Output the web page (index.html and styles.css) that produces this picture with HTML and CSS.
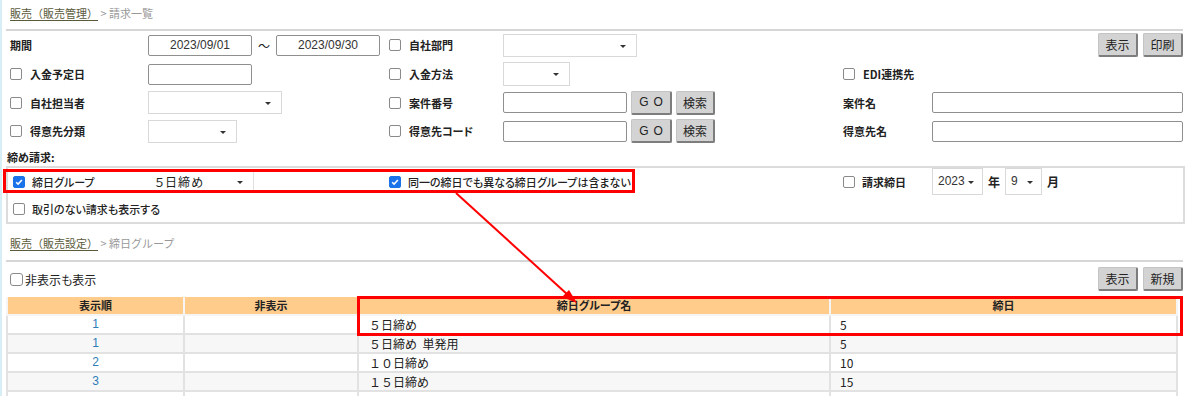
FILE: index.html
```html
<!DOCTYPE html>
<html lang="ja">
<head>
    <meta charset="UTF-8">
    <title>請求一覧</title>
    <link rel="stylesheet" href="styles.css">
</head>
<body>
    <div class="crumb"><a>販売（販売管理）</a> &gt; 請求一覧</div>

    <div class="filters">
        <div class="cell"><span class="lbl">期間</span></div>
        <div class="cell">
            <input class="txt date" value="2023/09/01">
            <span class="tilde">～</span>
            <input class="txt date" value="2023/09/30">
        </div>
        <div class="cell"><span class="chk"></span><span class="lbl">自社部門</span></div>
        <div class="cell"><div class="sel light" style="width:134px"></div></div>
        <div class="cell"></div>
        <div class="cell right">
            <button class="btn">表示</button><button class="btn">印刷</button>
        </div>

        <div class="cell"><span class="chk"></span><span class="lbl">入金予定日</span></div>
        <div class="cell"><input class="txt" style="width:104px"></div>
        <div class="cell"><span class="chk"></span><span class="lbl">入金方法</span></div>
        <div class="cell"><div class="sel light tall" style="width:67px"></div></div>
        <div class="cell wide"><span class="chk"></span><span class="lbl">EDI連携先</span></div>

        <div class="cell"><span class="chk"></span><span class="lbl">自社担当者</span></div>
        <div class="cell"><div class="sel light" style="width:134px"></div></div>
        <div class="cell"><span class="chk"></span><span class="lbl">案件番号</span></div>
        <div class="cell">
            <input class="txt" style="width:124px"><button class="btn go">GO</button><button class="btn">検索</button>
        </div>
        <div class="cell"><span class="lbl">案件名</span></div>
        <div class="cell"><input class="txt full"></div>

        <div class="cell"><span class="chk"></span><span class="lbl">得意先分類</span></div>
        <div class="cell"><div class="sel light" style="width:89px"></div></div>
        <div class="cell"><span class="chk"></span><span class="lbl">得意先コード</span></div>
        <div class="cell">
            <input class="txt" style="width:124px"><button class="btn go">GO</button><button class="btn">検索</button>
        </div>
        <div class="cell"><span class="lbl">得意先名</span></div>
        <div class="cell"><input class="txt full"></div>
    </div>

    <div class="section-title">締め請求:</div>
    <div class="closing">
        <div class="cell"><span class="chk on"><svg viewBox="0 0 12 12"><path d="M2.6 6.2l2.3 2.3 4.6-5" fill="none" stroke="#fff" stroke-width="1.8"/></svg></span><span class="lbl normal">締日グループ</span></div>
        <div class="cell"><div class="sel plain" style="width:106px">５日締め</div></div>
        <div class="cell"><span class="chk on"><svg viewBox="0 0 12 12"><path d="M2.6 6.2l2.3 2.3 4.6-5" fill="none" stroke="#fff" stroke-width="1.8"/></svg></span><span class="lbl normal">同一の締日でも異なる締日グループは含まない</span></div>
        <div class="cell"><span class="chk"></span><span class="lbl">請求締日</span></div>
        <div class="cell">
            <div class="sel small" style="width:51px">2023</div>
            <span class="unit">年</span>
            <div class="sel small" style="width:37px">9</div>
            <span class="unit">月</span>
        </div>

        <div class="cell row-all"><span class="chk"></span><span class="lbl normal">取引のない請求も表示する</span></div>
    </div>

    <div class="crumb second"><a>販売（販売設定）</a> &gt; 締日グループ</div>

    <div class="toolbar">
        <label class="show-hidden"><span class="chk"></span>非表示も表示</label>
        <div><button class="btn">表示</button><button class="btn">新規</button></div>
    </div>

    <table class="grid">
        <colgroup>
            <col style="width:177px">
            <col style="width:174px">
            <col style="width:472px">
            <col>
        </colgroup>
        <thead>
            <tr><th>表示順</th><th>非表示</th><th>締日グループ名</th><th>締日</th></tr>
        </thead>
        <tbody>
            <tr><td class="num">1</td><td></td><td>５日締め</td><td>5</td></tr>
            <tr><td class="num">1</td><td></td><td>５日締め&nbsp;&nbsp;単発用</td><td>5</td></tr>
            <tr><td class="num">2</td><td></td><td>１０日締め</td><td>10</td></tr>
            <tr><td class="num">3</td><td></td><td>１５日締め</td><td>15</td></tr>
            <tr><td class="num"></td><td></td><td></td><td></td></tr>
        </tbody>
    </table>

    <!-- annotation overlay -->
    <div class="mark mark-a"></div>
    <div class="mark mark-b"></div>
    <svg class="arrow" width="1189" height="396" viewBox="0 0 1189 396">
        <line x1="456" y1="193" x2="568" y2="295" stroke="#f00" stroke-width="2"/>
        <polygon points="577,303 562,297 569,290" fill="#f00"/>
    </svg>
</body>
</html>
```

FILE: styles.css
```css
body {
    margin: 0;
    padding: 0 4px 0 4px;
    font-family: "Noto Sans CJK JP", "Noto Sans", sans-serif;
    font-size: 11px;
    color: #222;
    border-left: 2px solid #d6eef4;
    position: relative;
    height: 396px;
    overflow: hidden;
    box-sizing: border-box;
}
.crumb {
    height: 31px;
    padding-left: 4px;
    line-height: 27px;
    color: #999;
    border-bottom: 2px solid #d6d6d6;
    margin-right: 2px;
    box-sizing: border-box;
    font-size: 11px;
}
.crumb a {
    color: #5b5b3c;
    text-decoration: underline;
    text-underline-offset: 2px;
}
.crumb.second {
    height: 38px;
    line-height: 38px;
}
.filters {
    display: grid;
    grid-template-columns: 138px 241px 114px 340px 89px 1fr;
    grid-auto-rows: 28.7px;
    padding-left: 4px;
    margin-right: 2px;
    font-feature-settings: "palt";
}
.cell {
    display: flex;
    align-items: center;
}
.cell.right {
    justify-content: flex-end;
}
.cell.wide {
    grid-column: 5 / span 2;
}
.lbl {
    font-weight: bold;
    white-space: nowrap;
}
.lbl.normal {
    font-weight: 500;
}
.chk {
    display: inline-block;
    width: 10px;
    height: 10px;
    border: 1px solid #8a8a8a;
    border-radius: 2px;
    margin-right: 8px;
    flex: none;
    background: #fff;
}
.chk.on {
    background: #1a73e8;
    border-color: #1a73e8;
}
.chk svg {
    display: block;
    width: 10px;
    height: 10px;
}
.txt {
    height: 21px;
    box-sizing: border-box;
    border: 1px solid #8f8f8f;
    border-radius: 2px;
    font-family: "Liberation Sans", sans-serif;
    font-size: 12px;
    color: #333;
    padding: 0 4px;
    margin: 0;
    background: #fff;
}
.txt.date {
    width: 104px;
    text-align: center;
}
.txt.full {
    width: 100%;
}
.tilde {
    margin: 0 6px;
    font-size: 12px;
    font-feature-settings: normal;
}
.sel {
    position: relative;
    height: 23px;
    box-sizing: border-box;
    border: 1px solid #d9d9d9;
    background: #fff;
    padding-left: 6px;
    line-height: 21px;
    font-size: 12px;
}
.sel::after {
    content: "";
    position: absolute;
    right: 10px;
    top: 10px;
    border-left: 3px solid transparent;
    border-right: 3px solid transparent;
    border-top: 3px solid #333;
}
.sel.tall {
    height: 24px;
}
.sel.plain {
    border-color: transparent;
    border-right-color: #e0e0e0;
    letter-spacing: 1px;
}
.sel.small {
    height: 27px;
    line-height: 25px;
    padding-left: 5px;
    font-family: "Liberation Sans", sans-serif;
    font-size: 12px;
    color: #333;
}
.sel.small::after {
    right: 8px;
    top: 12px;
}
.unit {
    font-weight: bold;
    margin: 0 5px;
    font-size: 12px;
}
.btn {
    height: 24px;
    width: 40px;
    padding: 0;
    margin-left: 5px;
    background: #d3d3d3;
    border: 1px solid #c4c4c4;
    border-right: 2px solid #7d7d7d;
    border-bottom: 2px solid #7d7d7d;
    border-radius: 2px;
    font-family: "Noto Sans CJK JP", sans-serif;
    font-size: 12px;
    color: #222;
}
.go {
    width: 41px;
    margin-left: 4px;
    letter-spacing: 5px;
    padding-left: 5px;
    font-family: "Liberation Sans", sans-serif;
}
.go + .btn {
    margin-left: 4px;
    width: 39px;
}
.section-title {
    font-weight: bold;
    height: 20px;
    line-height: 22px;
    padding-left: 1px;
    font-feature-settings: "palt";
}
.closing {
    display: grid;
    grid-template-columns: 135px 241px 454px 89px 1fr;
    grid-template-rows: 28px 26px;
    border: 2px solid #dcdcdc;
    padding-left: 5px;
    font-feature-settings: "palt";
}
.closing .chk {
    margin-right: 7px;
}
.row-all {
    grid-column: 1 / -1;
}
.toolbar {
    display: flex;
    justify-content: space-between;
    align-items: center;
    height: 35px;
    margin-right: 2px;
}
.show-hidden {
    display: flex;
    align-items: center;
    padding-left: 4px;
    font-size: 12px;
    font-feature-settings: "palt";
}
.show-hidden .chk {
    margin-right: 2px;
    width: 11px;
    height: 11px;
    border-radius: 3px;
}
.grid {
    width: 1172px;
    border-collapse: collapse;
    table-layout: fixed;
}
.grid th {
    background: #ffcc8c;
    font-weight: bold;
    height: 17px;
    padding: 0;
    border: 2px solid #f5f5f5;
    border-top: none;
    font-feature-settings: "palt";
}
.grid td {
    height: 17px;
    padding: 0 9px;
    border: 2px solid #e2e2e2;
    border-top: none;
    font-size: 12px;
    white-space: nowrap;
}
.grid td:nth-child(3) {
    padding-left: 10px;
}
.grid tbody tr:nth-child(even) td {
    background: #f7f7f7;
}
.grid td.num {
    text-align: center;
    color: #2e7db8;
    font-family: "Liberation Sans", sans-serif;
}
.mark {
    position: absolute;
    border: 3px solid #f00;
    box-sizing: border-box;
    pointer-events: none;
}
.mark-a {
    left: 1px;
    top: 169px;
    width: 632px;
    height: 24px;
}
.mark-b {
    left: 355px;
    top: 296px;
    width: 826px;
    height: 40px;
}
.arrow {
    position: absolute;
    left: -2px;
    top: 0;
    pointer-events: none;
}
```
